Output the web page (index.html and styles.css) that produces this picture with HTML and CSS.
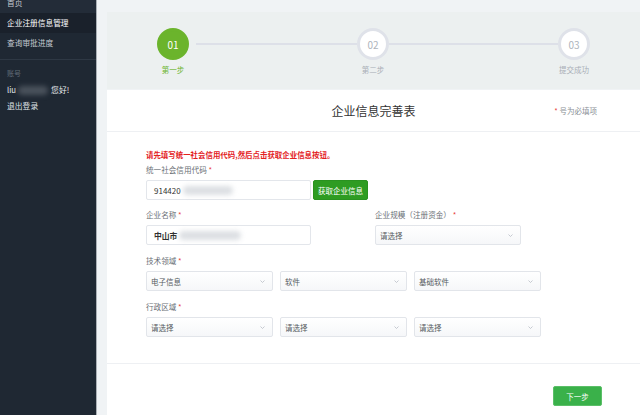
FILE: index.html
```html
<!DOCTYPE html>
<html lang="zh-CN">
<head>
<meta charset="utf-8">
<title>企业信息完善表</title>
<link rel="stylesheet" href="styles.css">
</head>
<body>
<aside class="sidebar">
  <ul class="menu">
    <li class="menu-item">首页</li>
    <li class="menu-item active">企业注册信息管理</li>
    <li class="menu-item">查询审批进度</li>
  </ul>
  <div class="account">
    <div class="account-title">账号</div>
    <div class="account-user">liu<span class="blur blur-dark"></span>您好!</div>
    <div class="account-logout">退出登录</div>
  </div>
</aside>
<main class="main">
  <section class="steps">
    <div class="step done"><div class="step-circle">01</div><div class="step-label">第一步</div></div>
    <div class="step-line first"></div>
    <div class="step"><div class="step-circle">02</div><div class="step-label">第二步</div></div>
    <div class="step-line second"></div>
    <div class="step"><div class="step-circle">03</div><div class="step-label">提交成功</div></div>
  </section>
  <section class="card">
    <header class="card-head">
      <h1 class="card-title">企业信息完善表</h1>
      <span class="card-note"><i class="req">*</i> 号为必填项</span>
    </header>
    <div class="card-body">
      <p class="notice">请先填写统一社会信用代码,然后点击获取企业信息按钮。</p>
      <div class="field">
        <div class="label">统一社会信用代码 <i class="req">*</i></div>
        <div class="input-group">
          <div class="input w-main">914420<span class="blur blur-light"></span></div>
          <button class="btn-fetch" type="button">获取企业信息</button>
        </div>
      </div>
      <div class="row compact">
        <div class="field">
          <div class="label">企业名称 <i class="req">*</i></div>
          <div class="input w-main bold">中山市<span class="blur blur-light wide"></span></div>
        </div>
        <div class="field scale">
          <div class="label">企业规模（注册资金） <i class="req">*</i></div>
          <div class="select w-scale"><span>请选择</span><svg class="chev" width="5" height="3" viewBox="0 0 5 3"><path d="M0.5 0.5 L2.5 2.5 L4.5 0.5" fill="none" stroke="#b9bec5" stroke-width="0.8"/></svg></div>
        </div>
      </div>
      <div class="row">
        <div class="field">
          <div class="label">技术领域 <i class="req">*</i></div>
          <div class="selects">
            <div class="select"><span>电子信息</span><svg class="chev" width="5" height="3" viewBox="0 0 5 3"><path d="M0.5 0.5 L2.5 2.5 L4.5 0.5" fill="none" stroke="#b9bec5" stroke-width="0.8"/></svg></div>
            <div class="select"><span>软件</span><svg class="chev" width="5" height="3" viewBox="0 0 5 3"><path d="M0.5 0.5 L2.5 2.5 L4.5 0.5" fill="none" stroke="#b9bec5" stroke-width="0.8"/></svg></div>
            <div class="select"><span>基础软件</span><svg class="chev" width="5" height="3" viewBox="0 0 5 3"><path d="M0.5 0.5 L2.5 2.5 L4.5 0.5" fill="none" stroke="#b9bec5" stroke-width="0.8"/></svg></div>
          </div>
        </div>
      </div>
      <div class="row">
        <div class="field">
          <div class="label">行政区域 <i class="req">*</i></div>
          <div class="selects">
            <div class="select"><span>请选择</span><svg class="chev" width="5" height="3" viewBox="0 0 5 3"><path d="M0.5 0.5 L2.5 2.5 L4.5 0.5" fill="none" stroke="#b9bec5" stroke-width="0.8"/></svg></div>
            <div class="select"><span>请选择</span><svg class="chev" width="5" height="3" viewBox="0 0 5 3"><path d="M0.5 0.5 L2.5 2.5 L4.5 0.5" fill="none" stroke="#b9bec5" stroke-width="0.8"/></svg></div>
            <div class="select"><span>请选择</span><svg class="chev" width="5" height="3" viewBox="0 0 5 3"><path d="M0.5 0.5 L2.5 2.5 L4.5 0.5" fill="none" stroke="#b9bec5" stroke-width="0.8"/></svg></div>
          </div>
        </div>
      </div>
    </div>
    <footer class="card-foot">
      <button class="btn-next" type="button">下一步</button>
    </footer>
  </section>
</main>
</body>
</html>
```
FILE: styles.css
```css
* { box-sizing: border-box; margin: 0; padding: 0; }
html, body { width: 640px; height: 415px; overflow: hidden; }
body {
  display: flex;
  font-family: "Noto Sans CJK SC", "Noto Sans", "Liberation Sans", sans-serif;
  background: #eff2f5;
}
i { font-style: normal; }
.req { color: #e8403a; }

/* sidebar */
.sidebar {
  width: 96px;
  flex: none;
  background: #1f2833;
  color: #c3c9d0;
}
.menu {
  list-style: none;
  margin-top: -7px;
  padding-bottom: 6px;
  border-bottom: 1px solid #2e3844;
}
.menu-item {
  height: 20px;
  line-height: 20px;
  padding-left: 7px;
  font-size: 7.7px;
  color: #c3c9d0;
}
.menu-item:first-child { background: #232c38; }
.menu-item.active { background: #1a212b; color: #ffffff; }
.account { padding-left: 7px; }
.account-title {
  margin-top: 7px;
  line-height: 12px;
  font-size: 7px;
  color: #606a76;
}
.account-user {
  margin-top: 5px;
  line-height: 12px;
  font-size: 7.8px;
  color: #e6e9ec;
  display: flex;
  align-items: center;
}
.account-logout {
  margin-top: 4px;
  line-height: 12px;
  font-size: 7.8px;
  color: #dfe3e7;
}
.blur {
  display: inline-block;
  height: 9px;
  border-radius: 5px;
  filter: blur(2.5px);
  vertical-align: middle;
}
.blur-dark { width: 30px; margin: 0 3px 0 2px; background: #4a525c; }
.blur-light { width: 50px; margin-left: 2px; background: #dcdfe3; }
.blur-light.wide { width: 62px; }

/* main */
.main {
  flex: 1;
  display: flex;
  flex-direction: column;
  border-left: 1px solid #aab0b6;
  padding: 12px 0 0 10px;
  background: #f0f3f5;
}
.steps {
  height: 77px;
  flex: none;
  background: #ecf0f0;
  display: flex;
  align-items: flex-start;
  padding: 16px 0 0 50px;
}
.step {
  width: 32px;
  display: flex;
  flex-direction: column;
  align-items: center;
}
.step-circle {
  width: 32px;
  height: 32px;
  border-radius: 50%;
  border: 3px solid #dfe2e9;
  background: #ffffff;
  color: #aeb4bc;
  font-size: 10px;
  display: flex;
  align-items: center;
  justify-content: center;
}
.step.done .step-circle {
  background: #6bb42c;
  border-color: #6bb42c;
  color: #ffffff;
}
.step-label {
  margin-top: 4px;
  line-height: 11px;
  font-size: 7.5px;
  white-space: nowrap;
  color: #a8aeb6;
}
.step.done .step-label { color: #6bb42c; }
.step-line {
  height: 2px;
  margin-top: 15px;
  background: #dde0e8;
}
.step-line.first { width: 161px; margin-left: 7px; }
.step-line.second { width: 169px; }

/* card */
.card {
  flex: 1;
  margin-top: 1px;
  background: #ffffff;
}
.card-head {
  height: 42px;
  display: grid;
  grid-template-columns: 1fr auto 1fr;
  align-items: center;
  border-bottom: 1px solid #eef0f3;
}
.card-title {
  grid-column: 2;
  font-size: 12px;
  font-weight: normal;
  color: #333333;
}
.card-note {
  justify-self: end;
  padding-right: 43px;
  font-size: 7.5px;
  color: #8a8f96;
}
.card-body {
  height: 232px;
  padding: 17px 0 0 39px;
  border-bottom: 1px solid #eef0f3;
}
.notice {
  line-height: 12px;
  font-size: 7.45px;
  font-weight: bold;
  color: #e3211d;
  margin-bottom: 3px;
}
.label {
  line-height: 12px;
  font-size: 7.6px;
  color: #6a6f76;
  margin-bottom: 4px;
}
.input-group { display: flex; }
.input {
  height: 20px;
  border: 1px solid #e3e6eb;
  border-radius: 2px;
  padding-left: 7px;
  font-size: 8px;
  color: #333333;
  display: flex;
  align-items: center;
}
.input.bold { font-size: 7.8px; font-weight: bold; color: #2f2f2f; }
.w-main { width: 165px; }
.btn-fetch {
  width: 55px;
  height: 20px;
  margin-left: 2px;
  border: 1px solid #2a9220;
  border-radius: 2px;
  background: #2e9c22;
  color: #ffffff;
  font-family: inherit;
  font-size: 7.5px;
}
.row { display: flex; margin-top: 10px; }
.row.compact { margin-top: 9px; }
.field.scale { margin-left: 64px; }
.selects { display: flex; gap: 7px; }
.select {
  width: 127px;
  height: 20px;
  border: 1px solid #e2e5ea;
  border-radius: 2px;
  background: linear-gradient(#ffffff, #f6f7f9);
  padding: 0 7px 0 4px;
  font-size: 7.5px;
  color: #555a60;
  display: flex;
  align-items: center;
  justify-content: space-between;
}
.select.w-scale { width: 146px; }
.chev { flex: none; }
.card-foot {
  display: flex;
  justify-content: flex-end;
  padding: 22px 38px 0 0;
}
.btn-next {
  width: 49px;
  height: 20px;
  border: 1px solid #5bbf68;
  border-radius: 2px;
  background: #3ab14a;
  color: #ffffff;
  font-family: inherit;
  font-size: 7.5px;
}
```
